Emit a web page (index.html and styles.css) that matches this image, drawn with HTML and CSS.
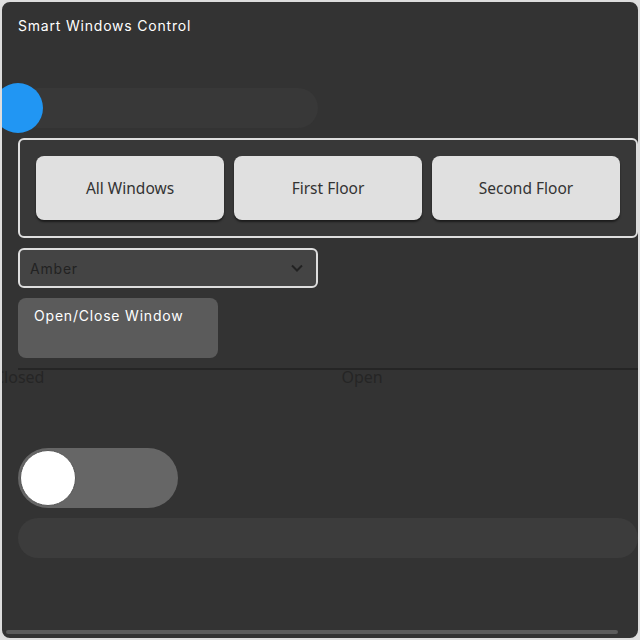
FILE: index.html
```html
<!DOCTYPE html>
<html>
<head>
<meta charset="utf-8">
<link rel="stylesheet" href="styles.css">
</head>
<body>
<div class="app">
  <div class="title">Smart Windows Control</div>
  <div class="slider"><div class="thumb"></div></div>
  <div class="group">
    <button class="seg">All Windows</button>
    <button class="seg">First Floor</button>
    <button class="seg">Second Floor</button>
  </div>
  <div class="select">
    <span class="select-text">Amber</span>
    <svg class="chev" width="14" height="10" viewBox="0 0 14 10"><path d="M2 2.5 L7 7.5 L12 2.5" fill="none" stroke="#222" stroke-width="2"/></svg>
  </div>
  <button class="action">Open/Close Window</button>
  <div class="range">
    <span class="lbl lbl-closed">Closed</span>
    <span class="lbl lbl-open">Open</span>
  </div>
  <div class="toggle"><div class="knob"></div></div>
  <div class="bar"></div>
  <div class="scrollbar"></div>
</div>
</body>
</html>
```
FILE: styles.css
```css
html, body {
  margin: 0;
  padding: 0;
  background: #e0e0e0;
}
.app {
  position: relative;
  box-sizing: border-box;
  width: 640px;
  height: 640px;
  border: 2px solid #dedede;
  border-radius: 10px;
  background: #333333;
  padding: 16px;
  overflow: hidden;
  display: flex;
  flex-direction: column;
  align-items: flex-start;
  gap: 10px;
  font-family: "Inter", "Open Sans", sans-serif;
  letter-spacing: 0.8px;
}
.title {
  color: #ffffff;
  font-size: 14px;
  line-height: 16px;
  height: 60px;
  flex-shrink: 0;
}
.slider {
  position: relative;
  width: 300px;
  height: 40px;
  flex-shrink: 0;
  background: #383838;
  border-radius: 20px;
}
.thumb {
  position: absolute;
  left: -25px;
  top: -5px;
  width: 50px;
  height: 50px;
  border-radius: 50%;
  background: #2196f3;
}
.group {
  box-sizing: border-box;
  width: 620px;
  flex-shrink: 0;
  border: 2px solid #dedede;
  border-radius: 6px;
  background: #383838;
  padding: 16px;
  display: flex;
  gap: 10px;
}
.seg {
  flex: 1;
  height: 64px;
  border: none;
  border-radius: 8px;
  background: #e0e0e0;
  color: #333333;
  font-family: "Noto Sans", sans-serif;
  font-size: 15.5px;
  letter-spacing: 0;
  line-height: 20px;
  padding: 0;
  box-shadow: 0 2px 2px rgba(0,0,0,0.5);
}
.select {
  box-sizing: border-box;
  width: 300px;
  height: 40px;
  flex-shrink: 0;
  border: 2px solid #dedede;
  border-radius: 6px;
  background: #444444;
  padding: 0 12px 0 10px;
  display: flex;
  align-items: center;
  justify-content: space-between;
}
.select-text {
  color: #222222;
  font-size: 14px;
}
.action {
  box-sizing: border-box;
  width: 200px;
  height: 60px;
  flex-shrink: 0;
  border: none;
  border-radius: 8px;
  background: #5b5b5b;
  color: #ffffff;
  font-family: "Inter", "Open Sans", sans-serif;
  font-size: 14px;
  letter-spacing: 0.8px;
  text-align: left;
  padding: 9px 16px 0 16px;
  display: flex;
  align-items: flex-start;
}
.range {
  box-sizing: border-box;
  width: 620px;
  height: 70px;
  flex-shrink: 0;
  border-top: 2px solid #252525;
  display: flex;
  font-family: "Noto Sans", sans-serif;
  font-size: 16px;
  letter-spacing: 0;
  line-height: 14px;
  color: #252525;
}
.lbl-closed {
  margin-left: -24px;
}
.lbl-open {
  margin-left: 297px;
}
.toggle {
  position: relative;
  width: 160px;
  height: 60px;
  flex-shrink: 0;
  border-radius: 30px;
  background: #666666;
}
.knob {
  position: absolute;
  left: 2px;
  top: 2px;
  width: 54px;
  height: 54px;
  border-radius: 50%;
  background: #ffffff;
  border: 1px solid #555555;
}
.bar {
  width: 620px;
  height: 40px;
  flex-shrink: 0;
  border-radius: 20px;
  background: #3c3c3c;
}
.scrollbar {
  position: absolute;
  left: 4px;
  bottom: 4px;
  width: 612px;
  height: 4px;
  border-radius: 2px;
  background: #5c5c5c;
}
```
